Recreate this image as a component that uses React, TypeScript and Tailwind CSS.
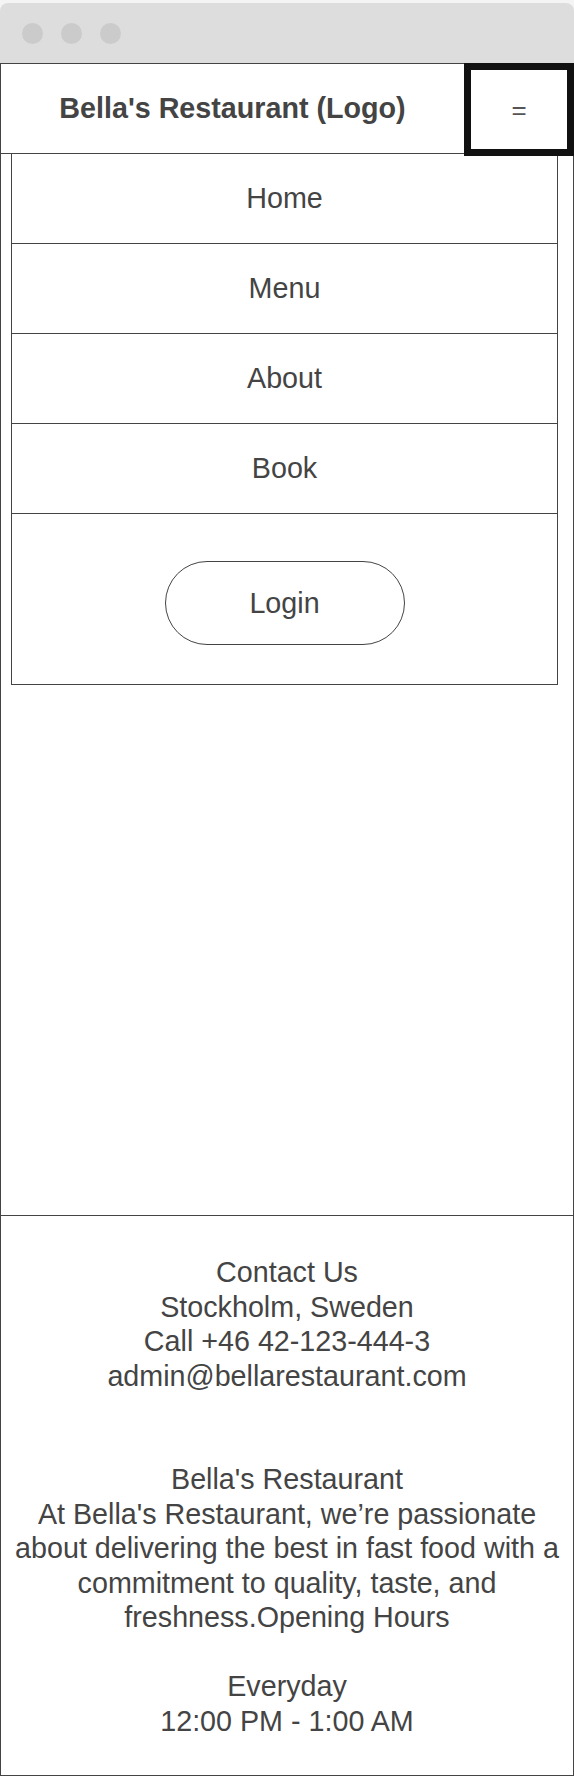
import React from "react";

const navItems = ["Home", "Menu", "About", "Book"];

export default function App() {
  return (
    <div className="w-[574px] bg-[#f4f4f4] pt-[3px] font-['Liberation_Sans',Arial,sans-serif] text-[#444]">
      {/* browser chrome */}
      <div className="flex h-[60px] items-center gap-[18px] rounded-t-[8px] bg-[#dddddd] pl-[22px]">
        <span className="h-[21px] w-[21px] rounded-full bg-[#cbcbcb]" />
        <span className="h-[21px] w-[21px] rounded-full bg-[#cbcbcb]" />
        <span className="h-[21px] w-[21px] rounded-full bg-[#cbcbcb]" />
      </div>

      {/* page */}
      <div className="border border-[#444] bg-white">
        {/* header */}
        <header className="flex h-[90px] items-start border-b border-[#444]">
          <div className="flex h-[89px] flex-1 items-center justify-center">
            <span className="text-[28.7px] font-bold leading-none">Bella's Restaurant (Logo)</span>
          </div>
          <button className="relative z-10 -mr-px -mt-px flex h-[93px] w-[110px] shrink-0 items-center justify-center border-[7px] border-[#111] bg-white text-[26px] leading-none text-[#555]">
            =
          </button>
        </header>

        {/* main */}
        <main className="h-[1061px]">
          <nav className="ml-[10px] w-[547px] border-x border-b border-[#444]">
            {navItems.map((item) => (
              <div
                key={item}
                className="flex h-[90px] items-center justify-center border-b border-[#444] text-[28.7px] leading-none"
              >
                {item}
              </div>
            ))}
            <div className="flex h-[170px] justify-center pt-[47px]">
              <button className="flex h-[84px] w-[240px] items-center justify-center rounded-full border border-[#444] text-[28.7px] leading-none">
                Login
              </button>
            </div>
          </nav>
        </main>

        {/* footer */}
        <footer className="border-t border-[#444] px-[8px] pb-[37px] pt-[39px] text-center text-[28.7px] leading-[34.5px]">
          <p>Contact Us</p>
          <p>Stockholm, Sweden</p>
          <p>Call +46 42-123-444-3</p>
          <p>admin@bellarestaurant.com</p>
          <p>&nbsp;</p>
          <p>&nbsp;</p>
          <p>Bella's Restaurant</p>
          <p>
            At Bella's Restaurant, we’re passionate about delivering the best in fast food with a commitment to
            quality, taste, and freshness.Opening Hours
          </p>
          <p>&nbsp;</p>
          <p>Everyday</p>
          <p>12:00 PM - 1:00 AM</p>
        </footer>
      </div>
    </div>
  );
}
